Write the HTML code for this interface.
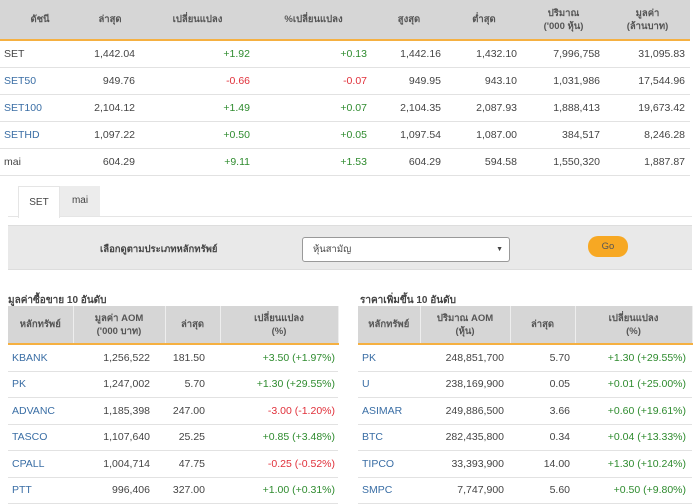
<!DOCTYPE html>
<html><head><meta charset="utf-8"><style>
body{margin:0;width:700px;height:504px;overflow:hidden;background:#fff;font-family:"Liberation Sans","Noto Sans CJK SC",sans-serif;font-size:10.5px;color:#444;position:relative}
table{border-collapse:collapse;position:absolute;table-layout:fixed}
th{background:#d6d6d6;font-weight:bold;color:#555;font-size:9.5px;text-align:center;border-bottom:2px solid #f5b041;line-height:13px;padding:0}
td{text-align:right;border-bottom:1px solid #e2e2e2;padding:0 5px 0 0;white-space:nowrap}
td.l{text-align:left;padding-left:4px}
.b{color:#3a6ea5}.g{color:#2e8b2e}.r{color:#e0303a}
#t1{left:0;top:0;width:690px}
#t1 th{height:39px}
#t1 td{height:26px}
.bt th{height:37px;border-right:1px solid #eee}
.bt td{height:25.5px}
#t2{left:8px;top:306px;width:330px}
#t3{left:358px;top:306px;width:334px}
</style></head><body>
<table id="t1">
<colgroup><col style="width:80px"><col style="width:60px"><col style="width:115px"><col style="width:117px"><col style="width:74px"><col style="width:76px"><col style="width:83px"><col style="width:85px"></colgroup>
<tr><th>ดัชนี</th><th>ล่าสุด</th><th>เปลี่ยนแปลง</th><th>%เปลี่ยนแปลง</th><th>สูงสุด</th><th>ต่ำสุด</th><th>ปริมาณ<br>('000 หุ้น)</th><th>มูลค่า<br>(ล้านบาท)</th></tr>
<tr><td class="l">SET</td><td>1,442.04</td><td class="g">+1.92</td><td class="g">+0.13</td><td>1,442.16</td><td>1,432.10</td><td>7,996,758</td><td>31,095.83</td></tr>
<tr><td class="l b">SET50</td><td>949.76</td><td class="r">-0.66</td><td class="r">-0.07</td><td>949.95</td><td>943.10</td><td>1,031,986</td><td>17,544.96</td></tr>
<tr><td class="l b">SET100</td><td>2,104.12</td><td class="g">+1.49</td><td class="g">+0.07</td><td>2,104.35</td><td>2,087.93</td><td>1,888,413</td><td>19,673.42</td></tr>
<tr><td class="l b">SETHD</td><td>1,097.22</td><td class="g">+0.50</td><td class="g">+0.05</td><td>1,097.54</td><td>1,087.00</td><td>384,517</td><td>8,246.28</td></tr>
<tr><td class="l">mai</td><td>604.29</td><td class="g">+9.11</td><td class="g">+1.53</td><td>604.29</td><td>594.58</td><td>1,550,320</td><td>1,887.87</td></tr>
</table>
<div style="position:absolute;left:18px;top:186px;width:40px;height:31px;background:#fff;border:1px solid #e5e5e5;border-bottom:none;text-align:center;line-height:31px;font-size:10px;z-index:2">SET</div>
<div style="position:absolute;left:60px;top:186px;width:40px;height:30px;background:#ececec;text-align:center;line-height:30px;font-size:10px">mai</div>
<div style="position:absolute;left:8px;top:216px;width:684px;border-top:1px solid #e5e5e5"></div>
<div style="position:absolute;left:8px;top:225px;width:684px;height:43px;background:#e9e9e9;border-top:1px solid #ddd;border-bottom:1px solid #ddd"></div>
<div style="position:absolute;left:100px;top:242px;font-size:9.5px;font-weight:bold;color:#444">เลือกดูตามประเภทหลักทรัพย์</div>
<div style="position:absolute;left:302px;top:237px;width:206px;height:23px;background:#fff;border:1px solid #999;border-radius:3px;font-size:9.5px;line-height:23px;color:#444"><span style="padding-left:10px">หุ้นสามัญ</span><span style="position:absolute;right:6px;font-size:7px">▼</span></div>
<div style="position:absolute;left:588px;top:236px;width:40px;height:21px;background:#f7a823;border-radius:10px;text-align:center;line-height:21px;font-size:9.5px;color:#555">Go</div>
<div style="position:absolute;left:8px;top:293px;font-size:10px;font-weight:bold;color:#444">มูลค่าซื้อขาย 10 อันดับ</div>
<div style="position:absolute;left:360px;top:293px;font-size:10px;font-weight:bold;color:#444">ราคาเพิ่มขึ้น 10 อันดับ</div>
<table id="t2" class="bt">
<colgroup><col style="width:65px"><col style="width:92px"><col style="width:55px"><col style="width:118px"></colgroup>
<tr><th>หลักทรัพย์</th><th>มูลค่า AOM<br>('000 บาท)</th><th>ล่าสุด</th><th>เปลี่ยนแปลง<br>(%)</th></tr>
<tr><td class="l b">KBANK</td><td style="padding-right:15px">1,256,522</td><td style="padding-right:15px">181.50</td><td class="g" style="padding-right:3px">+3.50 (+1.97%)</td></tr>
<tr><td class="l b">PK</td><td style="padding-right:15px">1,247,002</td><td style="padding-right:15px">5.70</td><td class="g" style="padding-right:3px">+1.30 (+29.55%)</td></tr>
<tr><td class="l b">ADVANC</td><td style="padding-right:15px">1,185,398</td><td style="padding-right:15px">247.00</td><td class="r" style="padding-right:3px">-3.00 (-1.20%)</td></tr>
<tr><td class="l b">TASCO</td><td style="padding-right:15px">1,107,640</td><td style="padding-right:15px">25.25</td><td class="g" style="padding-right:3px">+0.85 (+3.48%)</td></tr>
<tr><td class="l b">CPALL</td><td style="padding-right:15px">1,004,714</td><td style="padding-right:15px">47.75</td><td class="r" style="padding-right:3px">-0.25 (-0.52%)</td></tr>
<tr><td class="l b">PTT</td><td style="padding-right:15px">996,406</td><td style="padding-right:15px">327.00</td><td class="g" style="padding-right:3px">+1.00 (+0.31%)</td></tr>
</table>
<table id="t3" class="bt">
<colgroup><col style="width:62px"><col style="width:90px"><col style="width:65px"><col style="width:117px"></colgroup>
<tr><th>หลักทรัพย์</th><th>ปริมาณ AOM<br>(หุ้น)</th><th>ล่าสุด</th><th>เปลี่ยนแปลง<br>(%)</th></tr>
<tr><td class="l b">PK</td><td style="padding-right:6px">248,851,700</td><td>5.70</td><td class="g" style="padding-right:6px">+1.30 (+29.55%)</td></tr>
<tr><td class="l b">U</td><td style="padding-right:6px">238,169,900</td><td>0.05</td><td class="g" style="padding-right:6px">+0.01 (+25.00%)</td></tr>
<tr><td class="l b">ASIMAR</td><td style="padding-right:6px">249,886,500</td><td>3.66</td><td class="g" style="padding-right:6px">+0.60 (+19.61%)</td></tr>
<tr><td class="l b">BTC</td><td style="padding-right:6px">282,435,800</td><td>0.34</td><td class="g" style="padding-right:6px">+0.04 (+13.33%)</td></tr>
<tr><td class="l b">TIPCO</td><td style="padding-right:6px">33,393,900</td><td>14.00</td><td class="g" style="padding-right:6px">+1.30 (+10.24%)</td></tr>
<tr><td class="l b">SMPC</td><td style="padding-right:6px">7,747,900</td><td>5.60</td><td class="g" style="padding-right:6px">+0.50 (+9.80%)</td></tr>
</table>
</body></html>
